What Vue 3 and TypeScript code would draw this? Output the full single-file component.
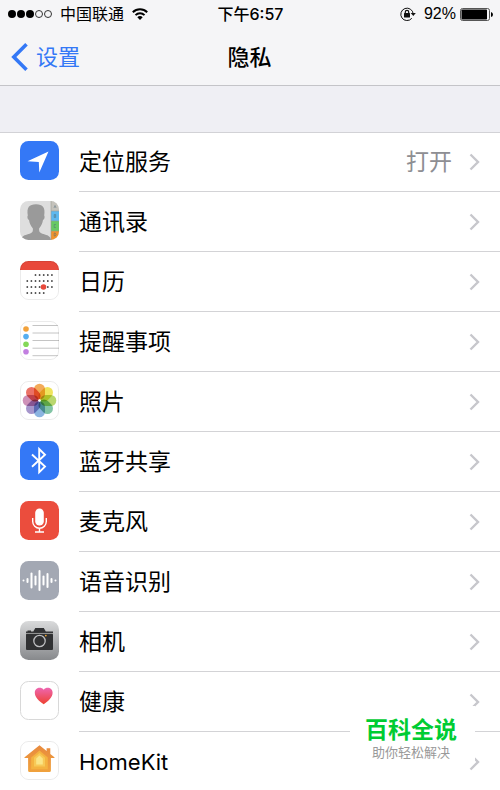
<script setup lang="ts">
interface Row {
  icon: string
  label: string
  value?: string
}

const rows: Row[] = [
  { icon: 'location', label: '定位服务', value: '打开' },
  { icon: 'contacts', label: '通讯录' },
  { icon: 'calendar', label: '日历' },
  { icon: 'reminders', label: '提醒事项' },
  { icon: 'photos', label: '照片' },
  { icon: 'bluetooth', label: '蓝牙共享' },
  { icon: 'microphone', label: '麦克风' },
  { icon: 'speech', label: '语音识别' },
  { icon: 'camera', label: '相机' },
  { icon: 'health', label: '健康' },
  { icon: 'home', label: 'HomeKit' },
]

const petals: string[] = ['#f0932b', '#ebdc2f', '#a5cc45', '#5fb38b', '#6a9fd8', '#8d78bd', '#c072a4', '#e5493a']

const calendarDots: { x: number; y: number }[] = [
  [3, 7], [1, 7], [1, 7], [1, 5],
].flatMap(([from, to], line) =>
  Array.from({ length: to - from + 1 }, (_, i) => ({ x: 3.2 + (from + i) * 4.1, y: 14 + line * 6 })),
)

const waves: number[] = [2, 5, 16, 10, 21, 10, 15, 5, 2]
const reminderColors: string[] = ['#f2a23c', '#55aef0', '#85d858', '#c27fe0']
</script>

<template>
  <div class="page">
    <header class="top">
      <div class="status">
        <div class="status-left">
          <svg class="signal" viewBox="0 0 46 10" aria-hidden="true">
            <circle v-for="n in 3" :key="n" :cx="n * 9 - 5" cy="5" r="4" />
            <circle v-for="n in 2" :key="n + 3" :cx="n * 9 + 22" cy="5" r="3.5" fill="none" stroke="#333" />
          </svg>
          <span>中国联通</span>
          <svg class="wifi" viewBox="0 0 16 12" fill="none" stroke="#000" stroke-width="2" aria-hidden="true">
            <path d="M.8 4.3a10.3 10.3 0 0 1 14.4 0M3.5 7.1a6.4 6.4 0 0 1 9 0" />
            <path d="M8 12 5.3 9.3a3.8 3.8 0 0 1 5.4 0z" fill="#000" stroke="none" />
          </svg>
        </div>
        <time class="clock">下午6:57</time>
        <div class="status-right">
          <svg class="lock" viewBox="0 0 16 14" fill="none" stroke="#111" aria-hidden="true">
            <path d="M11.8 11.3A6.2 6.2 0 1 1 13.2 7" />
            <path d="M10.7 6h5.1l-2.5 3z" fill="#111" stroke="none" />
            <rect x="4" y="6" width="6" height="4.500" rx=".5" fill="#111" stroke="none" />
            <path d="M5.3 6.500V5a1.700 1.700 0 0 1 3.400 0v1.500" stroke-width="1.200" />
          </svg>
          <span class="percent">92%</span>
          <svg class="battery" viewBox="0 0 33 13" aria-hidden="true">
            <rect x=".5" y=".5" width="29" height="12" rx="2" fill="none" stroke="#555" />
            <rect x="1.500" y="1.500" width="25.500" height="10" rx=".7" />
            <path d="M31 4q2 .5 2 2.500T31 9z" />
          </svg>
        </div>
      </div>
      <nav class="nav">
        <button class="back" type="button">
          <svg viewBox="0 0 17 28" fill="none" stroke="#3478f6" stroke-width="3.6" aria-hidden="true">
            <path d="M15.5 1.3 2.8 14l12.7 12.7" />
          </svg>
          <span>设置</span>
        </button>
        <h1>隐私</h1>
      </nav>
    </header>

    <main>
      <ul class="list">
        <li v-for="row in rows" :key="row.icon">
          <a class="row" href="#">
            <svg class="icon" viewBox="0 0 39 39" aria-hidden="true">
              <defs>
                <clipPath :id="`clip-${row.icon}`"><rect width="39" height="39" rx="8.5" /></clipPath>
              </defs>
              <g :clip-path="`url(#clip-${row.icon})`">
                <template v-if="row.icon === 'location'">
                  <rect width="39" height="39" fill="#3478f6" />
                  <path d="M28.5 10.5 7.5 20.2l11.3.7.5 10.6z" fill="#fff" />
                </template>

                <template v-else-if="row.icon === 'contacts'">
                  <rect width="39" height="39" fill="#dedede" />
                  <path d="M1 39c.4-4 3.7-4.8 7.500-6 3.500-1.200 4.600-1.800 4.400-5.600-2.200-2.400-3.300-5-3.900-8.400-1.600-.6-2-3.500-1.200-4.500C6.600 6.500 9 3.300 16 3.300s9.500 3.500 8.200 11.200c.8 1 .4 3.900-1.200 4.500-.6 3.400-1.700 6-3.900 8.400-.2 3.800 1 4.400 4.400 5.600 3.800 1.200 7.100 2 7.500 6z" fill="#9a9a9a" />
                  <rect x="31" width="8" height="10" fill="#c5c3bc" />
                  <rect x="31" y="10" width="8" height="10" fill="#5db8ef" />
                  <rect x="31" y="20" width="8" height="10" fill="#67c962" />
                  <rect x="31" y="30" width="8" height="9" fill="#f1932c" />
                  <path d="M31 0v39M31 10h8M31 20h8M31 30h8" stroke="#9b9b91" stroke-width=".6" />
                  <g fill="none" stroke="#52707a" stroke-opacity=".7" stroke-width=".7">
                    <path d="m34 7 1-2.500L36 7M34.200 13.500h1.500v3h-1.500zM34.200 15h1.500M36 23.500h-1.800v3H36M34.200 32v3h1l.8-1.500-.8-1.500z" />
                  </g>
                </template>

                <template v-else-if="row.icon === 'calendar'">
                  <rect width="39" height="39" fill="#fff" />
                  <rect width="39" height="9" fill="#e8493b" />
                  <rect v-for="(dot, i) in calendarDots" :key="i" :x="dot.x - .8" :y="dot.y - .8" width="1.6" height="1.6" rx=".4" fill="#222" />
                  <circle cx="23.500" cy="26" r="2.800" fill="#e8493b" />
                </template>

                <template v-else-if="row.icon === 'reminders'">
                  <rect width="39" height="39" fill="#fff" />
                  <circle v-for="(color, i) in reminderColors" :key="color" cx="6" :cy="8 + i * 7.6" r="2.8" :fill="color" />
                  <path d="M12.500 4.500H39M12.500 12H39M12.500 19.500H39M12.500 27.200H39M12.500 34.700H39" stroke="#c4c4c4" />
                </template>

                <template v-else-if="row.icon === 'photos'">
                  <rect width="39" height="39" fill="#fff" />
                  <rect v-for="(color, i) in petals" :key="color" class="petal" x="14" y="2.7" width="11" height="16" rx="5.5" :fill="color" :transform="`rotate(${i * 45} 19.5 19.5)`" />
                  <circle cx="19.500" cy="19.500" r="1.300" fill="#fff" />
                </template>

                <template v-else-if="row.icon === 'bluetooth'">
                  <rect width="39" height="39" fill="#3478f6" />
                  <path d="m12 13.500 13 12-5.800 5.800V8L25 13.700 12 25.700" fill="none" stroke="#fff" stroke-width="1.900" />
                </template>

                <template v-else-if="row.icon === 'microphone'">
                  <rect width="39" height="39" fill="#eb4d3d" />
                  <rect x="15.200" y="7.500" width="8.600" height="17" rx="4.300" fill="#fff" />
                  <path d="M12.700 17v3.500a6.800 6.800 0 0 0 13.600 0V17M19.500 27.300v3.500M15 31h9" fill="none" stroke="#fff" stroke-width="1.400" />
                </template>

                <template v-else-if="row.icon === 'speech'">
                  <rect width="39" height="39" fill="#a3a8b3" />
                  <rect v-for="(h, i) in waves" :key="i" :x="2.5 + i * 4" :y="19.5 - h / 2" width="2" :height="h" rx="1" fill="#fff" />
                </template>

                <template v-else-if="row.icon === 'camera'">
                  <defs>
                    <linearGradient id="camera-bg" x2="0" y2="1">
                      <stop stop-color="#d9dadb" />
                      <stop offset="1" stop-color="#87898c" />
                    </linearGradient>
                  </defs>
                  <rect width="39" height="39" fill="url(#camera-bg)" />
                  <path d="M6 12v-1.500h1.500v-1H11v1h2.300l2-3.500h8.500l2 3.500H33V12z" fill="#303133" />
                  <rect x="6" y="12.700" width="27" height="16.300" rx="1" fill="#303133" />
                  <path d="M6 12.400h27" stroke="#8c8c8c" stroke-width=".7" />
                  <circle cx="19.500" cy="20" r="5.700" fill="#303133" stroke="#bdbec0" stroke-width="1.300" />
                  <circle cx="25.800" cy="14.600" r=".9" fill="#f3a62c" />
                </template>

                <template v-else-if="row.icon === 'health'">
                  <defs>
                    <linearGradient id="heart" x2="0" y2="1">
                      <stop stop-color="#ee66b1" />
                      <stop offset="1" stop-color="#ee4130" />
                    </linearGradient>
                  </defs>
                  <rect width="39" height="39" fill="#fff" />
                  <path d="M23.700 23.200C19 20 14.800 16.300 14.800 11.700c0-5.400 6.400-6.400 8.900-3 2.500-3.400 8.900-2.400 8.900 3 0 4.600-4.200 8.300-8.900 11.500z" fill="url(#heart)" />
                </template>

                <template v-else>
                  <defs>
                    <linearGradient id="house" x2="0" y2="1">
                      <stop stop-color="#e88a3e" />
                      <stop offset="1" stop-color="#f0a23c" />
                    </linearGradient>
                  </defs>
                  <rect width="39" height="39" fill="#fff" />
                  <path d="M19.500 4.300 4.600 16.200q-.6.9.5.9h3v12.400q0 1.500 1.500 1.500h19.800q1.500 0 1.500-1.500V17.100h3q1-.1.500-.9L30.300 13V7.300h-3.700V10z" fill="url(#house)" />
                  <path d="m19.500 9.500-8.300 6.900v11.800h16.600V16.400z" fill="#f4b340" />
                  <path d="m19.500 12-5.500 4.700v8.800h11v-8.800z" fill="#f7c957" />
                  <path d="m19.500 14.400-3.300 3v6h6.600v-6z" fill="#fae587" />
                </template>
              </g>
              <rect v-if="['calendar', 'reminders', 'photos', 'home'].includes(row.icon)" x=".5" y=".5" width="38" height="38" rx="8" fill="none" stroke="#000" stroke-opacity=".08" />
              <rect v-if="row.icon === 'health'" x=".5" y=".5" width="38" height="38" rx="8" fill="none" stroke="#d8d8d8" />
            </svg>
            <span class="content">
              <span class="label">{{ row.label }}</span>
              <span v-if="row.value" class="value">{{ row.value }}</span>
              <svg class="chevron" viewBox="0 0 11 18" fill="none" stroke="#c7c7cc" stroke-width="2.4" aria-hidden="true">
                <path d="m1.500 1.500 7.500 7.500-7.500 7.500" />
              </svg>
            </span>
          </a>
        </li>
      </ul>
    </main>

    <aside class="brand">
      <strong>百科全说</strong>
      <span>助你轻松解决</span>
    </aside>
  </div>
</template>

<style>
body {
  margin: 0;
  background: #fff;
}
</style>

<style scoped>
.page {
  position: relative;
  background: #efeff4;
  color: #000;
  font-family: Inter, "Noto Sans CJK SC", sans-serif;
}

.top {
  background: #f5f5f7;
  border-bottom: 1px solid #c4c4c8;
}

.status {
  display: grid;
  grid-template-columns: 1fr auto 1fr;
  align-items: center;
  height: 28px;
  padding: 0 7px 0 8px;
  font-size: 16px;
  line-height: 28px;
}

.status-left,
.status-right {
  display: flex;
  align-items: center;
}

.status-left {
  gap: 6px;
}

.status-right {
  justify-content: flex-end;
  gap: 4px;
}

.signal {
  width: 46px;
  height: 10px;
}

.wifi {
  width: 16px;
  height: 12px;
  margin-left: 2px;
}

.clock {
  font-weight: 500;
}

.percent {
  font-family: "Liberation Sans", sans-serif;
}

.lock {
  width: 16px;
  height: 14px;
  margin-right: 4px;
}

.battery {
  width: 33px;
  height: 13px;
}

.nav {
  display: grid;
  grid-template-columns: 1fr auto 1fr;
  align-items: center;
  height: 57px;
  padding: 0 12px 0 11px;
}

.back {
  display: flex;
  align-items: center;
  justify-self: start;
  gap: 8px;
  padding: 0;
  border: 0;
  background: none;
  color: #3478f6;
  font: inherit;
  font-size: 22px;
  line-height: 32px;
}

.back svg {
  width: 17px;
  height: 28px;
}

h1 {
  margin: 0;
  font-size: 22px;
  font-weight: 500;
  line-height: 32px;
}

main {
  display: flow-root;
}

.list {
  margin: 46px 0 0;
  padding: 0;
  list-style: none;
  background: #fff;
  box-shadow: inset 0 1px #d2d2d6;
}

.row {
  display: flex;
  gap: 20px;
  padding-left: 20px;
  color: inherit;
  text-decoration: none;
}

.icon {
  flex: none;
  width: 39px;
  height: 39px;
  margin-top: 9px;
}

.petal {
  mix-blend-mode: multiply;
  opacity: 0.78;
}

.content {
  display: flex;
  flex: 1;
  align-items: center;
  box-sizing: border-box;
  height: 60px;
  padding-right: 20px;
  border-bottom: 1px solid #d3d3d6;
  font-size: 23px;
  line-height: 34px;
}

li:last-child .content {
  height: 58px;
  padding-top: 2px;
  border-bottom: 0;
  font-size: 22px;
}

.label {
  flex: 1;
}

.value {
  margin-right: 17px;
  color: #8e8e93;
}

.chevron {
  width: 11px;
  height: 18px;
}

.brand {
  position: absolute;
  right: 25px;
  bottom: 27px;
  display: flex;
  flex-direction: column;
  align-items: center;
  width: 125px;
  height: 57px;
  padding: 9px 3px 0 0;
  box-sizing: border-box;
  background: #fff;
}

.brand strong {
  color: #0c3;
  font-size: 23px;
  font-weight: 700;
  line-height: 30px;
}

.brand span {
  color: #999;
  font-size: 13px;
  line-height: 14px;
}
</style>
